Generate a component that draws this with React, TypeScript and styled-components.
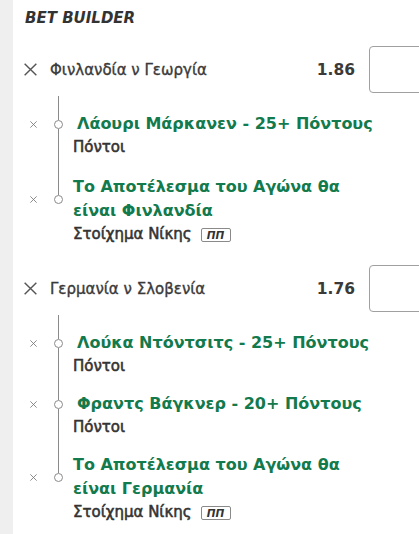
import React from "react";
import styled, { createGlobalStyle } from "styled-components";

const Global = createGlobalStyle`
  html, body { margin: 0; padding: 0; background: #ffffff; overflow: hidden; }
  body { font-family: "DejaVu Sans", "Noto Sans", sans-serif; }
`;

const Page = styled.div`
  display: flex;
  width: 419px;
  height: 534px;
  overflow: hidden;
`;

const Strip = styled.div`
  flex: none;
  width: 13px;
  background: #efefef;
`;

const Panel = styled.div`
  flex: 1;
  min-width: 0;
  padding: 8px 0 0 11px;
  background: #ffffff;
`;

const Heading = styled.div`
  font-size: 15px;
  line-height: 20px;
  font-weight: 700;
  font-style: italic;
  color: #333333;
  padding-left: 1px;
`;

const MatchRow = styled.div<{ $top: number }>`
  display: flex;
  align-items: center;
  height: 47px;
  margin-top: ${(p) => p.$top}px;
`;

const BigX = styled.svg`
  flex: none;
  width: 13px;
  height: 13px;
`;

const MatchName = styled.div`
  flex: 1;
  margin-left: 13px;
  font-size: 15px;
  font-weight: 400;
  color: #3a3a3a;
  white-space: nowrap;
  -webkit-text-stroke: 0.35px #3a3a3a;
`;

const Odds = styled.div`
  font-size: 15.5px;
  font-weight: 700;
  color: #3a3a3a;
  margin-right: 14px;
`;

const Stake = styled.div`
  flex: none;
  width: 60px;
  height: 47px;
  box-sizing: border-box;
  border: 1px solid #a0a0a0;
  border-radius: 4px;
  background: #fff;
  margin-right: -10px;
`;

const Legs = styled.div`
  margin-top: 3px;
`;

const Leg = styled.div<{ $gap: number }>`
  display: grid;
  grid-template-columns: 29px 11px 1fr;
  grid-template-rows: ${(p) => p.$gap}px auto auto;
`;

const LegSpacer = styled.div`
  grid-column: 2;
  grid-row: 1;
  display: flex;
  justify-content: center;
`;

const Line = styled.div<{ $hidden?: boolean }>`
  width: 1px;
  background: ${(p) => (p.$hidden ? "transparent" : "#8a8a8a")};
`;

const SmallX = styled.svg`
  grid-column: 1;
  grid-row: 2;
  align-self: center;
  justify-self: start;
  margin-left: 6px;
  width: 7px;
  height: 7px;
`;

const Node = styled.div`
  grid-column: 2;
  grid-row: 2;
  display: flex;
  flex-direction: column;
  align-items: center;
`;

const NodeLine = styled(Line)`
  flex: 1;
`;

const Dot = styled.div`
  flex: none;
  width: 9px;
  height: 9px;
  box-sizing: border-box;
  border: 1.5px solid #8a8a8a;
  border-radius: 50%;
  background: #fff;
`;

const SubRail = styled.div`
  grid-column: 2;
  grid-row: 3;
  display: flex;
  justify-content: center;
`;

const Title = styled.div<{ $indent: boolean }>`
  grid-column: 3;
  grid-row: 2;
  padding-left: ${(p) => (p.$indent ? 13 : 9)}px;
  font-size: 16px;
  line-height: 24px;
  font-weight: 700;
  color: #127a4c;
`;

const Sub = styled.div`
  grid-column: 3;
  grid-row: 3;
  padding-left: 9px;
  display: flex;
  align-items: center;
  gap: 9px;
  font-size: 15px;
  line-height: 23px;
  font-weight: 400;
  color: #333333;
`;

const SubText = styled.span`
  -webkit-text-stroke: 0.55px #333333;
`;

const Badge = styled.span`
  display: inline-flex;
  align-items: center;
  justify-content: center;
  width: 30px;
  height: 14px;
  box-sizing: border-box;
  border: 1px solid #8a8a8a;
  border-radius: 2px;
  font-size: 10.5px;
  line-height: 10px;
  font-weight: 700;
  font-style: italic;
  color: #333;
`;

type LegData = { title: React.ReactNode; sub: string; indent: boolean; badge?: boolean };
type MatchData = { name: string; odds: string; top: number; gap: number; legs: LegData[] };

const matches: MatchData[] = [
  {
    name: "Φινλανδία ν Γεωργία",
    odds: "1.86",
    top: 18,
    gap: 16,
    legs: [
      { title: "Λάουρι Μάρκανεν - 25+ Πόντους", sub: "Πόντοι", indent: true },
      {
        title: (
          <>
            Το Αποτέλεσμα του Αγώνα θα
            <br />
            είναι Φινλανδία
          </>
        ),
        sub: "Στοίχημα Νίκης",
        indent: false,
        badge: true,
      },
    ],
  },
  {
    name: "Γερμανία ν Σλοβενία",
    odds: "1.76",
    top: 19,
    gap: 14,
    legs: [
      { title: "Λούκα Ντόντσιτς - 25+ Πόντους", sub: "Πόντοι", indent: true },
      { title: "Φραντς Βάγκνερ - 20+ Πόντους", sub: "Πόντοι", indent: true },
      {
        title: (
          <>
            Το Αποτέλεσμα του Αγώνα θα
            <br />
            είναι Γερμανία
          </>
        ),
        sub: "Στοίχημα Νίκης",
        indent: false,
        badge: true,
      },
    ],
  },
];

const Cross = ({ as: C, stroke }: { as: typeof BigX | typeof SmallX; stroke: string }) => (
  <C viewBox="0 0 10 10">
    <path d="M0.5 0.5 L9.5 9.5 M9.5 0.5 L0.5 9.5" stroke={stroke} strokeWidth={C === BigX ? 1.1 : 1.2} fill="none" />
  </C>
);

export default function App() {
  return (
    <>
      <Global />
      <Page>
        <Strip />
        <Panel>
          <Heading>BET BUILDER</Heading>
          {matches.map((m) => (
            <React.Fragment key={m.name}>
              <MatchRow $top={m.top}>
                <Cross as={BigX} stroke="#555" />
                <MatchName>{m.name}</MatchName>
                <Odds>{m.odds}</Odds>
                <Stake />
              </MatchRow>
              <Legs>
                {m.legs.map((l, i) => {
                  const last = i === m.legs.length - 1;
                  return (
                    <Leg key={i} $gap={i === 0 ? 16 : m.gap}>
                      <LegSpacer>
                        <Line />
                      </LegSpacer>
                      <Cross as={SmallX} stroke="#777" />
                      <Node>
                        <NodeLine />
                        <Dot />
                        <NodeLine $hidden={last} />
                      </Node>
                      <Title $indent={l.indent}>{l.title}</Title>
                      <SubRail>
                        <Line $hidden={last} />
                      </SubRail>
                      <Sub>
                        <SubText>{l.sub}</SubText>
                        {l.badge && <Badge>ΠΠ</Badge>}
                      </Sub>
                    </Leg>
                  );
                })}
              </Legs>
            </React.Fragment>
          ))}
        </Panel>
      </Page>
    </>
  );
}
